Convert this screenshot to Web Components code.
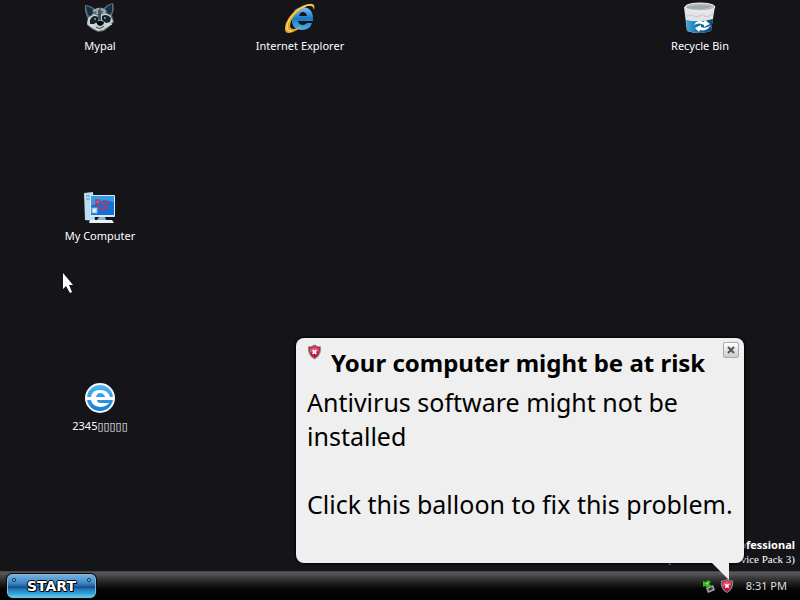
<!DOCTYPE html>
<html lang="en">
<head>
<meta charset="utf-8">
<title>Desktop</title>
<style>
  html, body {
    margin: 0;
    height: 100%;
    overflow: hidden;
    background: #141419;
    font-family: "Comic Sans MS", "Noto Sans", sans-serif;
  }
</style>
</head>
<body>
<x-desktop>
  <desktop-icon label="Mypal" style="grid-area: 1 / 1">
    <svg viewBox="0 0 32 32">
      <path d="M1 3Q6 3 11 7 16 5 20 6 23 2 29 1 31 7 28 13L30 20 25 25 20 29 14 30 8 27 3 23 4 17Q0 10 1 3Z" fill="#5d6d76"/>
      <path d="M2 4Q7 5 10 8L7 14 4 13ZM28 2Q23 4 21 7L25 13 28 10Z" fill="#12303f"/>
      <path d="M4 16 10 12 15 14 20 11 26 13 29 19 25 24 19 28 14 29 8 26 3 22Z" fill="#c9d1d1"/>
      <path d="M9 9 14 7 13 12M17 7 21 9 19 12" fill="none" stroke="#9fadb3" stroke-width="2"/>
      <path d="M6 18Q9 12 14 15L14 19 10 22 6 22ZM18 14Q23 11 27 16L26 20 22 21 18 18Z" fill="#14222b"/>
      <path d="M10 17 12 17M20 16 22 16" stroke="#b9dce5"/>
      <path d="M14 8 17 8 17 18 14 18Z" fill="#45545c"/>
      <path d="M12 20Q16 17 20 20 20 23 16 24 13 23 12 20Z" fill="#06090d"/>
      <path d="M12 25Q16 28 20 24" fill="none" stroke="#33424b"/>
      <path d="M5 23 9 24M23 24 28 22" stroke="#e8eeee"/>
    </svg>
  </desktop-icon>
  <desktop-icon label="Internet Explorer" style="grid-area: 1 / 2">
    <svg viewBox="0 0 32 32">
      <defs><linearGradient id="ie" x2="0" y2="1"><stop stop-color="#7bcaf2"/><stop offset=".5" stop-color="#1b78c4"/><stop offset="1" stop-color="#4db4ea"/></linearGradient></defs>
      <path d="M29 19H14Q15 23 19 23 21 23 23 21H28Q26 28 18 28 7 28 8 16 9 5 19 5 30 6 29 19ZM15 14H23Q22 10 19 10 16 10 15 14Z" fill="url(#ie)"/>
      <path d="M30 8Q33-2 18 4 6 11 2 21-2 34 9 30 14 28 18 24 7 30 6 24 6 17 15 9 28-1 30 8Z" fill="#e3a826"/>
      <path d="M29 4Q26 1 17 6 6 13 3 23 2 30 8 29" fill="none" stroke="#ffe78d"/>
    </svg>
  </desktop-icon>
  <desktop-icon label="Recycle Bin" style="grid-area: 1 / 4">
    <svg viewBox="0 0 32 32">
      <defs><linearGradient id="bin"><stop stop-color="#45a9d8"/><stop offset=".5" stop-color="#116ba6"/><stop offset="1" stop-color="#0b4778"/></linearGradient></defs>
      <path d="M0 5 3 29Q14 33 27 29L31 4Z" fill="#dfe5e8"/>
      <path d="M2 18Q15 21 29 17L27 29Q16 33 3 29Z" fill="url(#bin)"/>
      <ellipse cx="16" cy="5" rx="15" ry="4" fill="#b9bec1" stroke="#f4f5f5"/>
      <path d="M3 5Q15 2 29 4 20 9 3 6Z" fill="#a3a7a9"/>
      <path d="M3 14 8 13 12 15 18 13 23 15 29 12" fill="none" stroke="#dfa2a2" stroke-dasharray="2 1"/>
      <path d="M10 23Q13 17 20 20L21 18 26 22 20 25 20 23Q15 20 10 23ZM27 23Q23 30 16 28L15 30 11 26 17 23 17 25Q22 27 27 23Z" fill="#fff"/>
    </svg>
  </desktop-icon>
  <desktop-icon label="My Computer" style="grid-area: 2 / 1">
    <svg viewBox="0 0 32 32">
      <path d="M0 1 9 0 11 29 1 28Z" fill="#bcdcf0"/>
      <path d="M2 4H7M2 7H7" stroke="#5094bb"/>
      <rect x="6" y="3" width="25" height="22" rx="1" fill="#d7eafa"/>
      <rect x="7" y="4" width="23" height="19" fill="#1270d0"/>
      <path d="M7 4H30V10L20 8 7 14Z" fill="#369be6"/>
      <path d="M12 14V8H16L16 11 12 12 17 18M22 8 19 10 20 14 24 17M26 9 21 13M18 18 24 15" fill="none" stroke="#c23466" stroke-width="1.5"/>
      <rect x="8" y="16" width="5" height="5" fill="#e2edf5" stroke="#7eb4dc"/>
      <path d="M15 25H21L22 28H13Z" fill="#8eafc2"/>
      <path d="M6 28H28L30 31H5Z" fill="#e9f1f4"/>
    </svg>
  </desktop-icon>
  <desktop-icon label="2345▯▯▯▯▯" style="grid-area: 3 / 1">
    <svg viewBox="0 0 32 32">
      <defs><linearGradient id="br" x2="0" y2="1"><stop stop-color="#54b8f0"/><stop offset="1" stop-color="#167bd4"/></linearGradient></defs>
      <circle cx="16" cy="16" r="15" fill="#f4fbff"/>
      <circle cx="16" cy="16" r="13" fill="url(#br)"/>
      <path d="M30 15V18H13Q13 21 17 21H25Q22 25 16 25 8 24 7 18H3V15H7Q8 8 16 8 24 8 26 15ZM12 15H21Q20 11 16 11 13 11 12 15Z" fill="#fff"/>
    </svg>
  </desktop-icon>

  <build-info slot="build"></build-info>
  <mouse-pointer slot="pointer"></mouse-pointer>
  <task-bar slot="taskbar"></task-bar>
  <balloon-tip slot="balloon" heading="Your computer might be at risk">
    <p>Antivirus software might not be installed</p>
    <p>Click this balloon to fix this problem.</p>
  </balloon-tip>
</x-desktop>

<script>
const SHIELD = `
  <svg class="shield" viewBox="0 0 16 16" aria-hidden="true">
    <path d="M8 0Q11 2 15 2 16 12 8 16 0 12 1 2 5 2 8 0Z" fill="#8b8f9b"/>
    <path d="M8 1Q11 3 14 3 14 11 8 15 2 11 2 3 5 3 8 1Z" fill="#bd1738"/>
    <path d="M8 2Q11 4 13 4L12 8Q8 6 3 9L3 4Q6 4 8 2Z" fill="#df5270"/>
    <path d="M6 6 10 10M10 6 6 10" stroke="#fff" stroke-width="2"/>
  </svg>`;

function define(name, html, setup) {
  const template = document.createElement('template');
  template.innerHTML = html;

  customElements.define(name, class extends HTMLElement {
    constructor() {
      super();
      this.attachShadow({ mode: 'open' }).append(template.content.cloneNode(true));
      setup?.(this, this.shadowRoot);
    }
  });
}

define('x-desktop', `
  <style>
    :host {
      position: relative;
      display: flex;
      flex-direction: column;
      height: 100%;
    }

    main {
      flex: 1;
      min-height: 0;
      display: grid;
      grid-template-columns: repeat(4, 1fr);
      grid-template-rows: repeat(3, 190px);
    }

    ::slotted([slot="build"]) {
      position: absolute;
      right: 5px;
      bottom: 33px;
    }

    ::slotted([slot="balloon"]) {
      position: absolute;
      right: 56px;
      bottom: 37px;
    }

    ::slotted([slot="pointer"]) {
      position: absolute;
      left: 62px;
      top: 273px;
    }
  </style>
  <main><slot></slot></main>
  <slot name="build"></slot>
  <slot name="taskbar"></slot>
  <slot name="balloon"></slot>
  <slot name="pointer"></slot>
`);

define('desktop-icon', `
  <style>
    :host {
      display: block;
      text-align: center;
    }

    button {
      display: inline-flex;
      flex-direction: column;
      align-items: center;
      gap: 4px;
      padding: 2px 0 0;
      border: 0;
      background: none;
      color: #fff;
      font: 11px/16px "Comic Sans MS", "Noto Sans", "DejaVu Sans", sans-serif;
      white-space: nowrap;
    }

    ::slotted(svg) {
      width: 32px;
      height: 32px;
    }
  </style>
  <button type="button"><slot></slot><span></span></button>
`, (host, root)=> {
  root.querySelector('span').textContent = host.getAttribute('label');
});

define('build-info', `
  <style>
    :host {
      color: #fff;
      font-size: 11px;
      line-height: 15px;
      text-align: right;
      white-space: nowrap;
    }

    div {
      font-weight: bold;
    }

    small {
      display: block;
      font: 11px/15px "Liberation Serif", serif;
    }
  </style>
  <div>Windows XP Professional</div>
  <small>(Build 2600: Service Pack 3)</small>
`);

define('mouse-pointer', `
  <style>
    :host {
      display: block;
      pointer-events: none;
    }

    svg {
      display: block;
      width: 12px;
      height: 21px;
    }
  </style>
  <svg viewBox="0 0 12 21"><path d="M1 0V16L4 13 8 20 10 19 7 12H11Z" fill="#fff"/></svg>
`);

define('task-bar', `
  <style>
    :host {
      display: flex;
      align-items: center;
      justify-content: space-between;
      height: 29px;
      padding: 0 13px 0 7px;
      background: linear-gradient(#444 0, #59595b 2px, #404042 6px, #202021 12px, #050505 18px, #000 100%);
    }

    button {
      position: relative;
      width: 89px;
      height: 24px;
      padding: 0;
      border: 1px solid #8fb4c5;
      border-radius: 5px;
      outline: 1px solid #080b10;
      background: linear-gradient(#74b0de 0, #3c8ccb 35%, #2363a6 50%, #164c8c 56%, #2478b8 64%, #2ba5df 85%, #63c7ef 100%);
      color: #fff;
      font: bold 14px/22px "DejaVu Sans", sans-serif;
      text-shadow: -1px 0 #000, 1px 0 #000, 0 -1px #000, 0 1px #000, 1px 1px #000;
    }

    button::before,
    button::after {
      content: "";
      position: absolute;
      top: 3px;
      left: 4px;
      width: 2px;
      height: 2px;
      border: 1px solid #0b2540;
      border-radius: 50%;
      background: #a7d5ed;
    }

    button::after {
      left: auto;
      right: 4px;
    }

    .tray {
      display: flex;
      align-items: center;
      gap: 4px;
    }

    svg {
      width: 14px;
      height: 14px;
    }

    time {
      margin-left: 8px;
      color: #ddd;
      font: 11px/16px "Noto Sans", sans-serif;
    }
  </style>
  <button type="button">START</button>
  <div class="tray">
    <svg viewBox="0 0 14 14" aria-hidden="true">
      <path d="M4 9 11 6 13 11 6 14Z" fill="#a5aaa5"/>
      <path d="M6 10 10 8 11 10 7 12Z" fill="#29352b"/>
      <path d="M1 2 4 3 6 1 9 3 7 5 10 7 5 9 3 7 1 8Z" fill="#38b51f"/>
      <path d="M3 4 7 3 6 6Z" fill="#8ce65b"/>
    </svg>
    ${SHIELD}
    <time datetime="20:31">8:31 PM</time>
  </div>
`);

define('balloon-tip', `
  <style>
    :host {
      display: flex;
      flex-direction: column;
      box-sizing: border-box;
      width: 448px;
      min-height: 225px;
      padding: 6px 5px 40px 11px;
      border-radius: 8px;
      background: #efefef;
      box-shadow: 0 0 2px 1px #050507;
      color: #000;
    }

    header {
      display: flex;
      align-items: flex-start;
      gap: 9px;
      height: 41px;
    }

    .shield {
      flex: none;
      width: 15px;
      height: 16px;
    }

    h1 {
      flex: 1;
      margin: 0;
      font-size: 24px;
      line-height: 38px;
      white-space: nowrap;
    }

    button {
      display: grid;
      place-items: center;
      width: 16px;
      height: 16px;
      margin-top: -2px;
      padding: 0;
      border: 1px solid #aaa;
      border-radius: 2px;
      background: linear-gradient(#fff, #ccc);
    }

    button svg {
      width: 8px;
      height: 8px;
    }

    .text {
      display: grid;
      gap: 34px;
      font-size: 25px;
      line-height: 34px;
    }

    ::slotted(p) {
      margin: 0;
    }

    .tail {
      position: absolute;
      top: 100%;
      right: 14px;
      width: 19px;
      height: 18px;
      margin-top: -1px;
    }
  </style>
  <header>
    ${SHIELD}
    <h1></h1>
    <button type="button" aria-label="Close">
      <svg viewBox="0 0 8 8"><path d="M1 1 7 7M7 1 1 7" stroke="#555" stroke-width="2"/></svg>
    </button>
  </header>
  <div class="text"><slot></slot></div>
  <svg class="tail" viewBox="0 0 19 18"><path d="M0 0 18 18V0Z" fill="#efefef"/></svg>
`, (host, root)=> {
  root.querySelector('h1').textContent = host.getAttribute('heading');
});
</script>
</body>
</html>
